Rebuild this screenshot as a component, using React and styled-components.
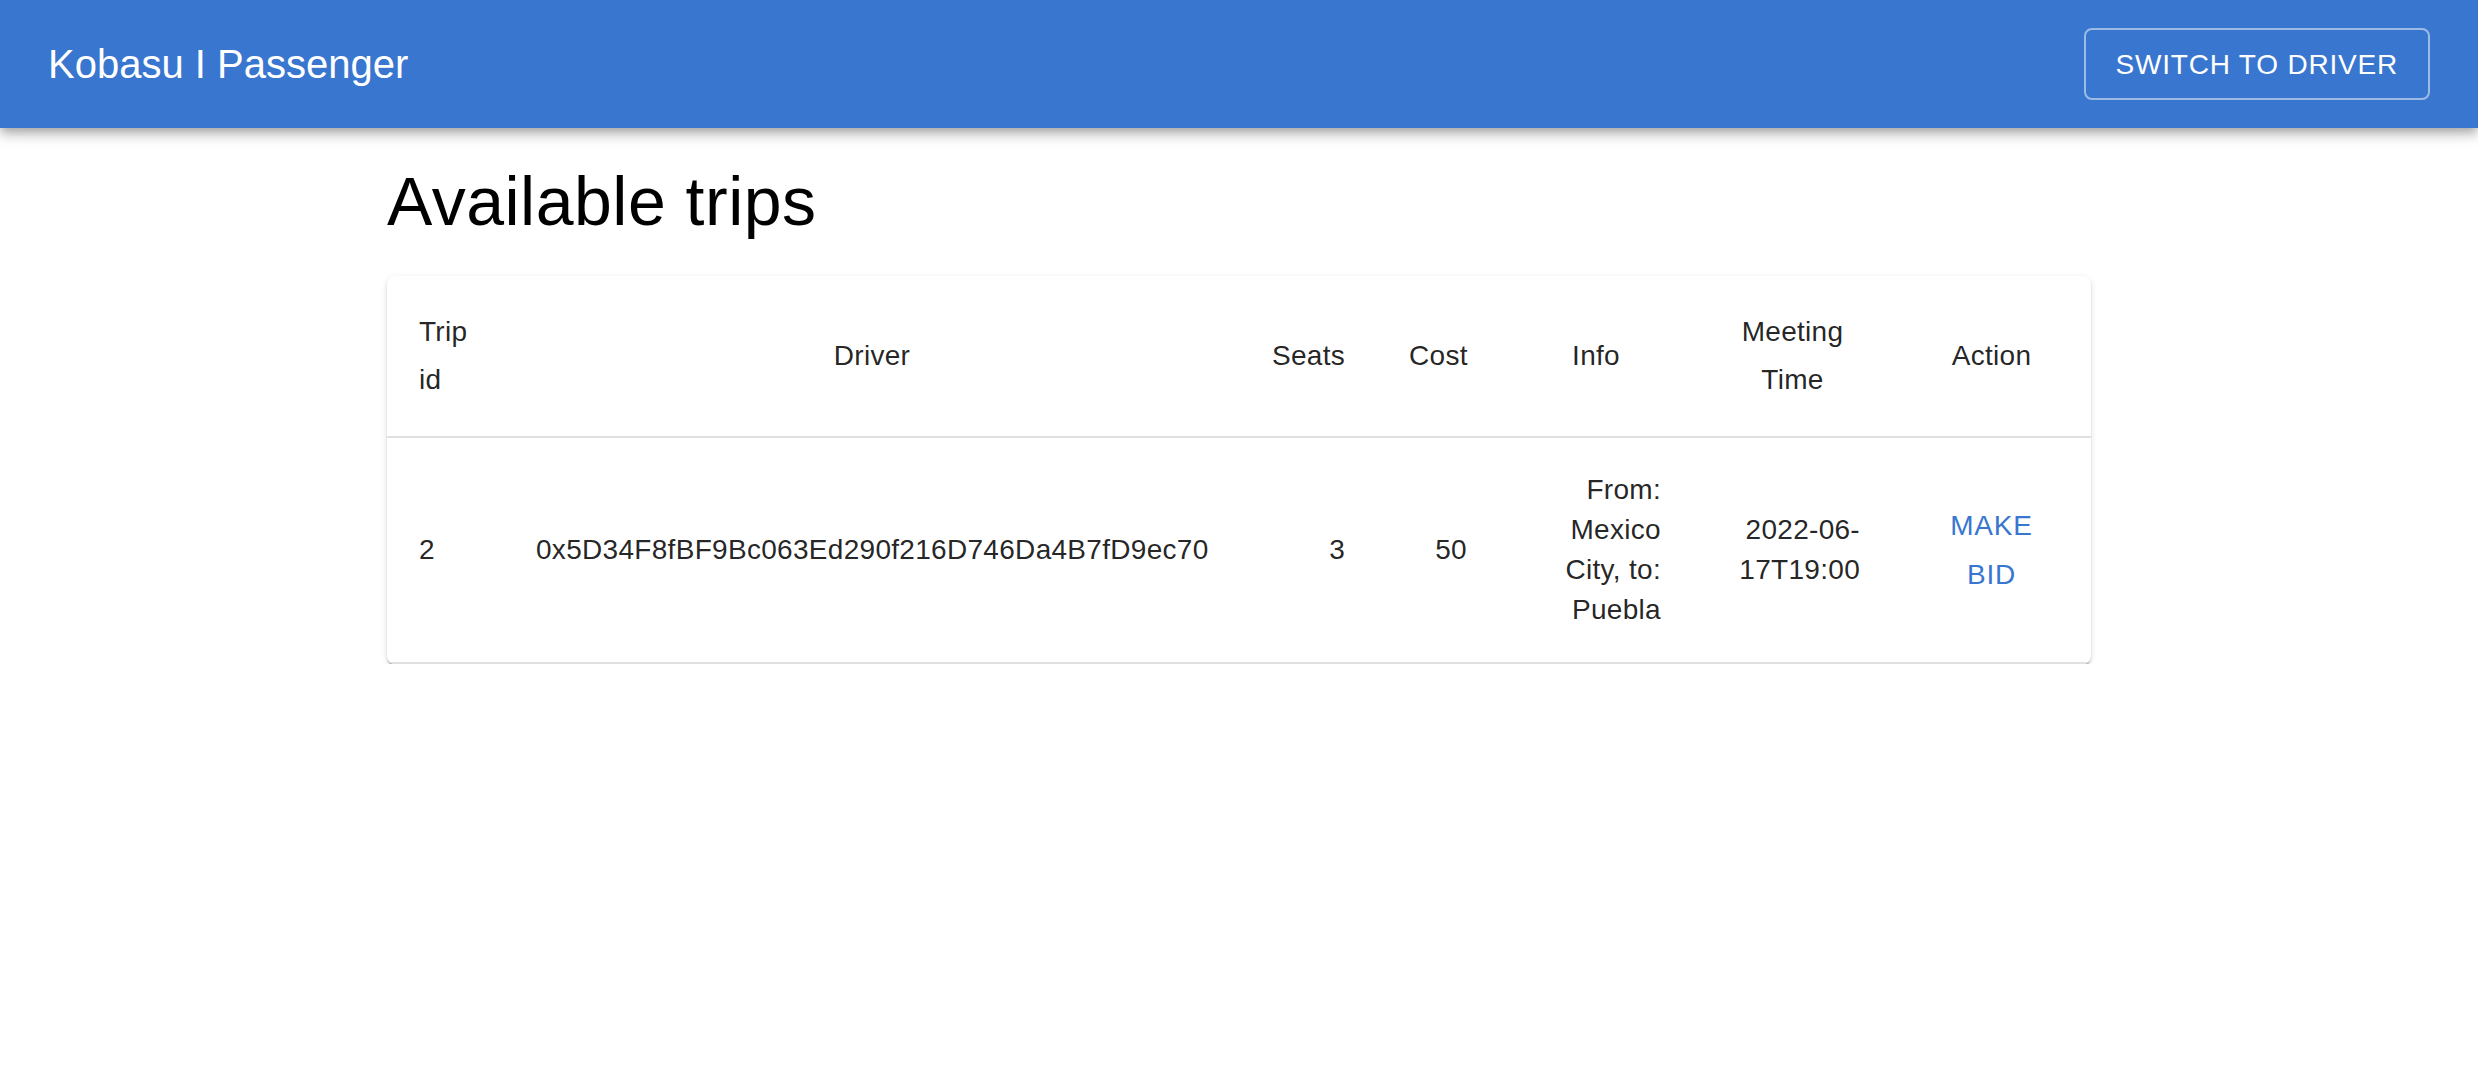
import styled, { createGlobalStyle } from "styled-components";

const GlobalStyle = createGlobalStyle`
  * {
    box-sizing: border-box;
  }

  body {
    margin: 0;
    background: #ffffff;
    font-family: "Liberation Sans", Arial, Helvetica, sans-serif;
    color: rgba(0, 0, 0, 0.87);
  }
`

const AppBar = styled.header`
  display: flex;
  align-items: center;
  justify-content: space-between;
  height: 128px;
  padding: 0 48px;
  background: #3876cf;
  color: #ffffff;
  box-shadow: 0px 4px 8px -2px rgba(0, 0, 0, 0.2),
    0px 8px 10px 0px rgba(0, 0, 0, 0.14),
    0px 2px 20px 0px rgba(0, 0, 0, 0.12);
  position: relative;
  z-index: 1;
`

const Brand = styled.h1`
  margin: 0;
  font-size: 40px;
  font-weight: 400;
  line-height: 1.6;
`

const OutlinedButton = styled.button`
  display: inline-flex;
  align-items: center;
  justify-content: center;
  height: 72px;
  padding: 0 30px;
  border: 2px solid rgba(255, 255, 255, 0.5);
  border-radius: 8px;
  background: transparent;
  color: #ffffff;
  font-family: inherit;
  font-size: 28px;
  line-height: 1.75;
  letter-spacing: 0.8px;
  text-transform: uppercase;
  cursor: pointer;
`

const Main = styled.main`
  max-width: 1800px;
  margin: 0 auto;
  padding: 0 48px;
`

const PageTitle = styled.h2`
  margin: 31px 0 33px;
  font-size: 68px;
  font-weight: 400;
  line-height: 84px;
  letter-spacing: 0.5px;
  color: #000000;
`

const Card = styled.div`
  background: #ffffff;
  border-radius: 8px;
  overflow: hidden;
  box-shadow: 0px 4px 2px -2px rgba(0, 0, 0, 0.22),
    0px 2px 2px 0px rgba(0, 0, 0, 0.14),
    0px 2px 6px 0px rgba(0, 0, 0, 0.12);
`

const Table = styled.table`
  width: 100%;
  border-collapse: collapse;
  table-layout: fixed;
`

const HeadCell = styled.th`
  width: ${({ $w }) => $w}px;
  padding: 32px;
  font-size: 28px;
  font-weight: 400;
  line-height: 48px;
  letter-spacing: 0.3px;
  text-align: ${({ $align }) => $align || "left"};
  color: rgba(0, 0, 0, 0.87);
  border-bottom: 2px solid rgba(224, 224, 224, 1);
  vertical-align: middle;
`

const BodyCell = styled.td`
  padding: 32px;
  font-size: 28px;
  line-height: 40px;
  letter-spacing: 0.3px;
  text-align: ${({ $align }) => $align || "left"};
  color: rgba(0, 0, 0, 0.87);
  border-bottom: 2px solid rgba(224, 224, 224, 1);
  vertical-align: middle;
`

const TextButton = styled.button`
  display: inline-flex;
  align-items: center;
  justify-content: center;
  min-width: 128px;
  padding: 12px 16px;
  border: none;
  border-radius: 8px;
  background: transparent;
  color: #3876cf;
  font-family: inherit;
  font-size: 28px;
  line-height: 1.75;
  letter-spacing: 0.8px;
  text-transform: uppercase;
  text-align: center;
  cursor: pointer;
`

const columns = [
  { key: "id", label: "Trip id", width: 117, head: "left" },
  { key: "driver", label: "Driver", width: 736, head: "center" },
  { key: "seats", label: "Seats", width: 137, head: "right" },
  { key: "cost", label: "Cost", width: 122, head: "right" },
  { key: "info", label: "Info", width: 194, head: "center" },
  { key: "time", label: "Meeting Time", width: 199, head: "center" },
  { key: "action", label: "Action", width: 199, head: "center" },
];

const trips = [
  {
    id: 2,
    driver: "0x5D34F8fBF9Bc063Ed290f216D746Da4B7fD9ec70",
    seats: 3,
    cost: 50,
    from: "Mexico City",
    to: "Puebla",
    date: "2022-06-",
    time: "17T19:00",
  },
];

const App = () => {
  return (
    <>
      <GlobalStyle />
      <AppBar>
        <Brand>Kobasu I Passenger</Brand>
        <OutlinedButton>Switch to driver</OutlinedButton>
      </AppBar>
      <Main>
        <PageTitle>Available trips</PageTitle>
        <Card>
          <Table>
            <thead>
              <tr>
                {columns.map((col) => (
                  <HeadCell key={col.key} $w={col.width} $align={col.head}>
                    {col.label}
                  </HeadCell>
                ))}
              </tr>
            </thead>
            <tbody>
              {trips.map((trip) => (
                <tr key={trip.id}>
                  <BodyCell>{trip.id}</BodyCell>
                  <BodyCell>{trip.driver}</BodyCell>
                  <BodyCell $align="right">{trip.seats}</BodyCell>
                  <BodyCell $align="right">{trip.cost}</BodyCell>
                  <BodyCell $align="right">
                    From: {trip.from}, to: {trip.to}
                  </BodyCell>
                  <BodyCell $align="right">
                    {trip.date}
                    <wbr />
                    {trip.time}
                  </BodyCell>
                  <BodyCell $align="center">
                    <TextButton>Make bid</TextButton>
                  </BodyCell>
                </tr>
              ))}
            </tbody>
          </Table>
        </Card>
      </Main>
    </>
  );
};

export default App;
